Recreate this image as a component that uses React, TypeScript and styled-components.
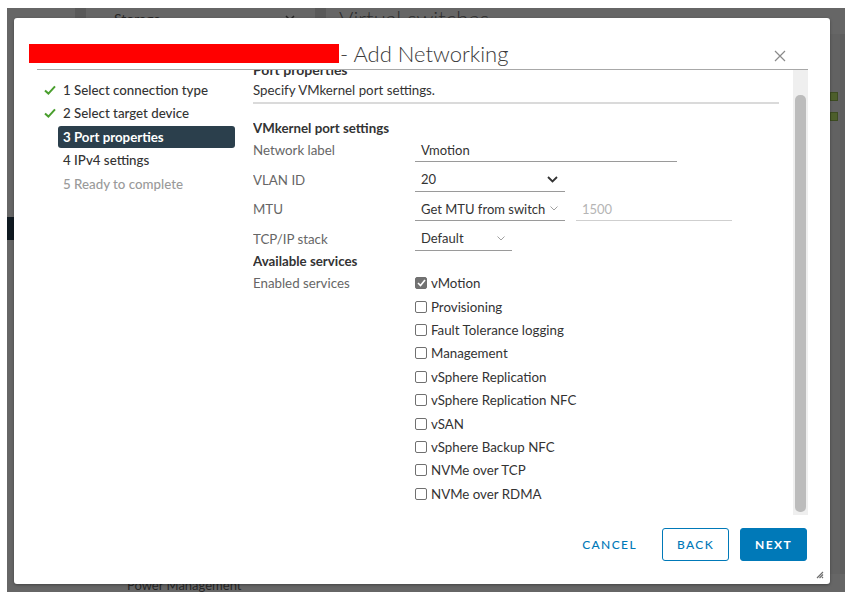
import styled, { createGlobalStyle } from "styled-components";

const GlobalStyle = createGlobalStyle`
  html, body {
    margin: 0;
    padding: 0;
    background: #ffffff;
  }
  body {
    width: 860px;
    height: 595px;
    overflow: hidden;
    font-family: Lato, "Open Sans", "DejaVu Sans", sans-serif;
  }
  * { box-sizing: border-box; }
`;

const Page = styled.div`
  padding: 8px 0 0 7px;
`;

/* dimmed page behind the dialog */
const Backdrop = styled.div`
  position: relative;
  width: 838px;
  height: 584px;
  background: #666666;
  display: flex;
  flex-direction: column;
  overflow: hidden;
`;

const BgTop = styled.div`
  display: flex;
  height: 26px;
  flex-shrink: 0;
`;

const BgGap = styled.div<{ $w: number }>`
  width: ${(p) => p.$w}px;
  flex-shrink: 0;
`;

const BgRail = styled.div`
  width: 11px;
  flex-shrink: 0;
  background: #5a5a5a;
`;

const BgPane = styled.div`
  width: 229px;
  flex-shrink: 0;
  display: flex;
  justify-content: space-between;
  align-items: center;
  height: 16px;
  margin-top: 2px;
  padding: 0 20px 0 28px;
  font-size: 14px;
  color: #262626;
`;

const BgTitle = styled.div`
  padding-left: 13px;
  font-size: 22px;
  font-weight: 300;
  line-height: 22px;
  color: #2e2e2e;
`;

const BgMiddle = styled.div`
  flex: 1;
  display: grid;
  grid-template-columns: 7px 1fr 15px;
`;

const BgLeft = styled.div`
  display: flex;
  flex-direction: column;
`;

const BgBlock = styled.div`
  margin-top: 183px;
  height: 23px;
  background: #101a21;
`;

const BgRight = styled.div`
  display: flex;
  flex-direction: column;
  gap: 11px;
  padding-top: 58px;
  border-right: 5px solid #5e5e5e;
  background: #626262;
`;

const BgSquare = styled.div`
  width: 8px;
  height: 9px;
  background: #4d5f2b;
  border: 1px solid #3d4c21;
`;

const BgBottom = styled.div`
  height: 18px;
  flex-shrink: 0;
  padding: 3px 0 0 120px;
  font-size: 13px;
  line-height: 16px;
  color: #262626;
`;

/* dialog */
const Modal = styled.div`
  position: absolute;
  top: 10px;
  left: 7px;
  width: 816px;
  height: 566px;
  background: #ffffff;
  border-radius: 3px;
  box-shadow: 0 1px 3px rgba(0, 0, 0, 0.35);
  display: flex;
  flex-direction: column;
  overflow: hidden;
`;

const Header = styled.header`
  height: 52px;
  flex-shrink: 0;
  margin: 0 22px 0 23px;
  padding-top: 20px;
  border-bottom: 1px solid #a8a8a8;
  display: flex;
  align-items: center;
  justify-content: space-between;
`;

const TitleRow = styled.div`
  display: flex;
  align-items: center;
`;

const Redaction = styled.span`
  width: 310px;
  height: 19px;
  margin-left: -8px;
  flex-shrink: 0;
  background: #ff0000;
`;

const Title = styled.h1`
  margin: 0 0 0 1px;
  font-size: 22px;
  font-weight: 300;
  line-height: 22px;
  color: #3a3a3a;
`;

const CloseButton = styled.button`
  width: 12px;
  height: 12px;
  margin: 4px 22px 0 0;
  padding: 0;
  border: 0;
  background: none;
  display: flex;
`;

const Body = styled.div`
  flex: 1;
  min-height: 0;
  margin: 0 22px 0 23px;
  display: flex;
  overflow: hidden;
`;

const Nav = styled.nav`
  width: 198px;
  flex-shrink: 0;
  padding-top: 8.5px;
  display: flex;
  flex-direction: column;
  gap: 1.5px;
`;

const NavRow = styled.div`
  display: flex;
  align-items: center;
  height: 22px;
`;

const CheckSlot = styled.span`
  width: 21px;
  flex-shrink: 0;
  padding-left: 7px;
  display: flex;
`;

const NavItem = styled.div<{ $active?: boolean; $disabled?: boolean }>`
  flex: 1;
  height: 22px;
  padding: 0 5px;
  border-radius: 3px;
  font-size: 13.3px;
  line-height: 22px;
  font-weight: ${(p) => (p.$active ? 700 : 500)};
  color: ${(p) => (p.$active ? "#ffffff" : p.$disabled ? "#9a9a9a" : "#333333")};
  background: ${(p) => (p.$active ? "#2b3f4c" : "transparent")};
`;

const Content = styled.div`
  flex: 1;
  min-width: 0;
  margin-left: 18px;
  padding-right: 14px;
  overflow: hidden;
  color: #333333;
`;

const PageHeading = styled.h2`
  margin: -8px 0 0;
  font-size: 14px;
  font-weight: 700;
  line-height: 16px;
  color: #333333;
`;

const Description = styled.p`
  margin: 4px 0 0;
  font-size: 13.3px;
  line-height: 16px;
`;

const Divider = styled.div`
  margin-top: 4px;
  height: 2px;
  background: #dadada;
`;

const SectionTitle = styled.h3<{ $gap: number }>`
  margin: ${(p) => p.$gap}px 0 0;
  font-size: 13.3px;
  font-weight: 700;
  line-height: 16px;
  color: #333333;
`;

const FormGrid = styled.div`
  display: grid;
  grid-template-columns: 162px 1fr;
  row-gap: 5.5px;
  margin-top: 2px;
`;

const Label = styled.div<{ $h?: number }>`
  font-size: 13.3px;
  line-height: ${(p) => p.$h ?? 24}px;
  color: #666666;
`;

const FieldRow = styled.div`
  display: flex;
  gap: 11px;
`;

const Field = styled.div<{ $w: number; $muted?: boolean }>`
  width: ${(p) => p.$w}px;
  height: 24px;
  padding: 0 7px 0 6px;
  border-bottom: 1px solid ${(p) => (p.$muted ? "#cfcfcf" : "#9a9a9a")};
  display: flex;
  align-items: center;
  justify-content: space-between;
  gap: 4px;
  font-size: 13px;
  white-space: nowrap;
  color: ${(p) => (p.$muted ? "#b5b5b5" : "#333333")};

  svg {
    flex-shrink: 0;
  }
`;

const ServicesGrid = styled.div`
  display: grid;
  grid-template-columns: 162px 1fr;
  margin-top: 3px;
`;

const CheckList = styled.div`
  display: flex;
  flex-direction: column;
`;

const CheckRow = styled.label`
  display: flex;
  align-items: center;
  gap: 4px;
  height: 23.4px;
  font-size: 13.3px;
  color: #333333;
`;

const Box = styled.span<{ $checked?: boolean }>`
  width: 12px;
  height: 12px;
  flex-shrink: 0;
  border: 1px solid #707070;
  border-radius: 2px;
  background: ${(p) => (p.$checked ? "#727272" : "#ffffff")};
  display: flex;
  align-items: center;
  justify-content: center;
`;

const Track = styled.div`
  width: 15px;
  flex-shrink: 0;
  background: #efefef;
  display: flex;
  padding: 25px 2px 3px;
`;

const Thumb = styled.div`
  flex: 1;
  background: #bcbcbc;
  border-radius: 5px;
`;

const Footer = styled.footer`
  height: 69px;
  flex-shrink: 0;
  padding: 13px 23px 0 0;
  display: flex;
  justify-content: flex-end;
  align-items: flex-start;
  gap: 11px;
`;

const Button = styled.button<{ $variant: "flat" | "outline" | "solid" }>`
  height: 33px;
  min-width: 67px;
  padding: 0 12px;
  border-radius: 3px;
  font-family: inherit;
  font-size: 12px;
  letter-spacing: 1.4px;
  font-weight: ${(p) => (p.$variant === "solid" ? 700 : 500)};
  color: ${(p) => (p.$variant === "solid" ? "#ffffff" : "#0079b8")};
  background: ${(p) => (p.$variant === "solid" ? "#0079b8" : "#ffffff")};
  border: 1px solid ${(p) => (p.$variant === "flat" ? "transparent" : "#0079b8")};
  margin-right: ${(p) => (p.$variant === "flat" ? 1 : 0)}px;
`;

const Grip = styled.span`
  position: absolute;
  right: 6px;
  bottom: 5px;
  display: flex;
`;

const Check = () => (
  <svg width="12" height="10" viewBox="0 0 12 10">
    <path d="M1 5.4 L4.4 8.6 L11 1.4" fill="none" stroke="#4a9f2e" strokeWidth="2" />
  </svg>
);

const Chevron = ({ strong }: { strong?: boolean }) =>
  strong ? (
    <svg width="11" height="7" viewBox="0 0 11 7">
      <polyline points="1,1 5.5,5.5 10,1" fill="none" stroke="#333" strokeWidth="1.8" />
    </svg>
  ) : (
    <svg width="8" height="5" viewBox="0 0 8 5">
      <polyline points="0.5,0.5 4,4 7.5,0.5" fill="none" stroke="#a0a0a0" strokeWidth="1" />
    </svg>
  );

const steps = [
  { label: "1 Select connection type", done: true },
  { label: "2 Select target device", done: true },
  { label: "3 Port properties", active: true },
  { label: "4 IPv4 settings" },
  { label: "5 Ready to complete", disabled: true },
];

const services = [
  { label: "vMotion", checked: true },
  { label: "Provisioning" },
  { label: "Fault Tolerance logging" },
  { label: "Management" },
  { label: "vSphere Replication" },
  { label: "vSphere Replication NFC" },
  { label: "vSAN" },
  { label: "vSphere Backup NFC" },
  { label: "NVMe over TCP" },
  { label: "NVMe over RDMA" },
];

const App = () => {
  return (
    <Page>
      <GlobalStyle />
      <Backdrop>
        <BgTop>
          <BgGap $w={68} />
          <BgRail />
          <BgPane>
            <span>Storage</span>
            <svg width="10" height="6" viewBox="0 0 10 6">
              <polyline points="1,1 5,5 9,1" fill="none" stroke="#262626" strokeWidth="1.5" />
            </svg>
          </BgPane>
          <BgRail />
          <BgTitle>Virtual switches</BgTitle>
        </BgTop>
        <BgMiddle>
          <BgLeft>
            <BgBlock />
          </BgLeft>
          <div />
          <BgRight>
            <BgSquare />
            <BgSquare />
          </BgRight>
        </BgMiddle>
        <BgBottom>Power Management</BgBottom>

        <Modal>
          <Header>
            <TitleRow>
              <Redaction />
              <Title>- Add Networking</Title>
            </TitleRow>
            <CloseButton aria-label="Close">
              <svg width="12" height="12" viewBox="0 0 12 12">
                <path d="M1 1 L11 11 M11 1 L1 11" stroke="#8a8a8a" strokeWidth="1.2" />
              </svg>
            </CloseButton>
          </Header>

          <Body>
            <Nav>
              {steps.map((s) => (
                <NavRow key={s.label}>
                  <CheckSlot>{s.done && <Check />}</CheckSlot>
                  <NavItem $active={s.active} $disabled={s.disabled}>
                    {s.label}
                  </NavItem>
                </NavRow>
              ))}
            </Nav>

            <Content>
              <PageHeading>Port properties</PageHeading>
              <Description>Specify VMkernel port settings.</Description>
              <Divider />

              <SectionTitle $gap={16}>VMkernel port settings</SectionTitle>
              <FormGrid>
                <Label>Network label</Label>
                <FieldRow>
                  <Field $w={262}>Vmotion</Field>
                </FieldRow>

                <Label>VLAN ID</Label>
                <FieldRow>
                  <Field $w={150}>
                    20
                    <Chevron strong />
                  </Field>
                </FieldRow>

                <Label>MTU</Label>
                <FieldRow>
                  <Field $w={150}>
                    Get MTU from switch
                    <Chevron />
                  </Field>
                  <Field $w={156} $muted>
                    1500
                  </Field>
                </FieldRow>

                <Label>TCP/IP stack</Label>
                <FieldRow>
                  <Field $w={97}>
                    Default
                    <Chevron />
                  </Field>
                </FieldRow>
              </FormGrid>

              <SectionTitle $gap={2}>Available services</SectionTitle>
              <ServicesGrid>
                <Label $h={23.4}>Enabled services</Label>
                <CheckList>
                  {services.map((s) => (
                    <CheckRow key={s.label}>
                      <Box $checked={s.checked}>
                        {s.checked && (
                          <svg width="9" height="8" viewBox="0 0 9 8">
                            <path d="M1 4 L3.5 6.5 L8 1" fill="none" stroke="#fff" strokeWidth="1.6" />
                          </svg>
                        )}
                      </Box>
                      {s.label}
                    </CheckRow>
                  ))}
                </CheckList>
              </ServicesGrid>
            </Content>

            <Track>
              <Thumb />
            </Track>
          </Body>

          <Footer>
            <Button $variant="flat">CANCEL</Button>
            <Button $variant="outline">BACK</Button>
            <Button $variant="solid">NEXT</Button>
          </Footer>

          <Grip>
            <svg width="8" height="8" viewBox="0 0 8 8">
              <path d="M7 1 L1 7 M7 3.5 L3.5 7 M7 6 L6 7" stroke="#6e6e6e" strokeWidth="1.2" />
            </svg>
          </Grip>
        </Modal>
      </Backdrop>
    </Page>
  );
};

export default App;
